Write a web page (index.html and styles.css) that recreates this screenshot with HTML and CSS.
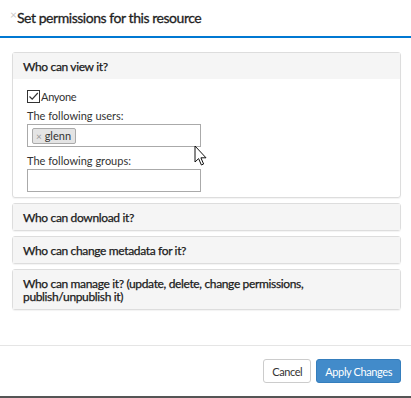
FILE: index.html
```html
<!DOCTYPE html>
<html lang="en">
<head>
  <meta charset="UTF-8" />
  <title>Permissions</title>
  <link rel="stylesheet" href="styles.css">
</head>
<body>
  <div class="modal">
    <div class="modal-header">
      <span class="close">&times;</span>
      <h4>Set permissions for this resource</h4>
    </div>
    <div class="modal-body">
      <div class="panel">
        <div class="panel-heading">Who can view it?</div>
        <div class="panel-body">
          <label class="check">
            <span class="box">
              <svg width="13" height="13" viewBox="0 0 13 13">
                <rect x="0.5" y="0.5" width="12" height="12" fill="#fff" stroke="#333"/>
                <path d="M2.5 6.5 L5.2 9.2 L10.8 3" fill="none" stroke="#333" stroke-width="1.2"/>
              </svg>
            </span>
            Anyone
          </label>
          <p class="field-label first">The following users:</p>
          <div class="field">
            <span class="tag"><span class="tag-x">&times;</span> glenn</span>
          </div>
          <p class="field-label">The following groups:</p>
          <div class="field"></div>
          <svg class="cursor" width="14" height="22" viewBox="0 0 14 22">
            <path d="M1 1 L1 17 L4.6 13.6 L7.4 20 L9.6 19 L6.9 12.8 L12 12.8 Z" fill="#fff" stroke="#111" stroke-width="1" stroke-linejoin="miter"/>
          </svg>
        </div>
      </div>
      <div class="panel">
        <div class="panel-heading">Who can download it?</div>
      </div>
      <div class="panel">
        <div class="panel-heading">Who can change metadata for it?</div>
      </div>
      <div class="panel">
        <div class="panel-heading">Who can manage it? (update, delete, change permissions, publish/unpublish it)</div>
      </div>
    </div>
    <div class="modal-footer">
      <button class="btn">Cancel</button>
      <button class="btn btn-primary">Apply Changes</button>
    </div>
  </div>
</body>
</html>
```

FILE: styles.css
```css
:root {
  --text: #333333;
  --border: #dddddd;
  --panel-head: #f5f5f5;
  --blue: #0078d2;
  --primary: #428bca;
}

body {
  margin: 0;
  font-family: Lato, "Liberation Sans", sans-serif;
  color: var(--text);
  background: #ffffff;
}

h4,
p {
  margin: 0;
}

.modal {
  height: 398px;
  box-sizing: border-box;
  display: flex;
  flex-direction: column;
  border-bottom: 2px solid #555555;
}

.modal-header {
  display: flex;
  align-items: flex-start;
  height: 38px;
  box-sizing: border-box;
  padding: 9px 10px 0 10px;
  border-bottom: 2px solid var(--blue);
}

.close {
  color: #c8c8c8;
  font-size: 12px;
  line-height: 10px;
  margin-top: 1px;
}

.modal-header h4 {
  font-size: 14px;
  font-weight: 400;
  line-height: 18px;
  letter-spacing: -0.45px;
  color: #1e1e1e;
  -webkit-text-stroke: 0.3px #1e1e1e;
}

.modal-body {
  flex: 1;
  padding: 14px 10px 0 12px;
  display: flex;
  flex-direction: column;
  gap: 5px;
}

.panel {
  border: 1px solid var(--border);
  border-radius: 3px;
  box-shadow: 0 1px 1px rgba(0, 0, 0, 0.05);
  font-size: 12px;
}

.panel-heading {
  background: var(--panel-head);
  padding: 7px 10px 6px 10px;
  line-height: 13px;
  font-weight: 400;
  letter-spacing: -0.35px;
  color: #1a1a1a;
  -webkit-text-stroke: 0.25px #1a1a1a;
}

.panel-body {
  position: relative;
  padding: 11px 14px 5px 14px;
  font-size: 11px;
}

.check {
  display: flex;
  align-items: flex-end;
  gap: 1px;
  line-height: 12px;
  letter-spacing: -0.3px;
}

.box {
  display: flex;
}

.field-label {
  margin-top: 7px;
  margin-bottom: 2px;
  line-height: 13px;
}

.field-label.first {
  margin-top: 6px;
}

.field {
  width: 174px;
  height: 23px;
  box-sizing: border-box;
  border: 1px solid #aaaaaa;
  padding: 3px 4px;
}

.tag {
  display: inline-block;
  border: 1px solid #aaaaaa;
  border-radius: 2px;
  background: #e4e4e4;
  padding: 0 4px 0 3px;
  line-height: 13px;
}

.tag-x {
  color: #999999;
  font-size: 10px;
}

.cursor {
  position: absolute;
  left: 181px;
  top: 66px;
}

.modal-footer {
  border-top: 1px solid #e5e5e5;
  display: flex;
  align-items: flex-start;
  justify-content: flex-end;
  gap: 5px;
  padding: 13px 10px 13px 0;
}

.btn {
  font-family: inherit;
  font-size: 11px;
  letter-spacing: -0.4px;
  height: 24px;
  padding: 0 8px;
  border: 1px solid #cccccc;
  border-radius: 3px;
  background: #ffffff;
  color: var(--text);
}

.btn-primary {
  background: var(--primary);
  border-color: #357ebd;
  color: #ffffff;
}
```
